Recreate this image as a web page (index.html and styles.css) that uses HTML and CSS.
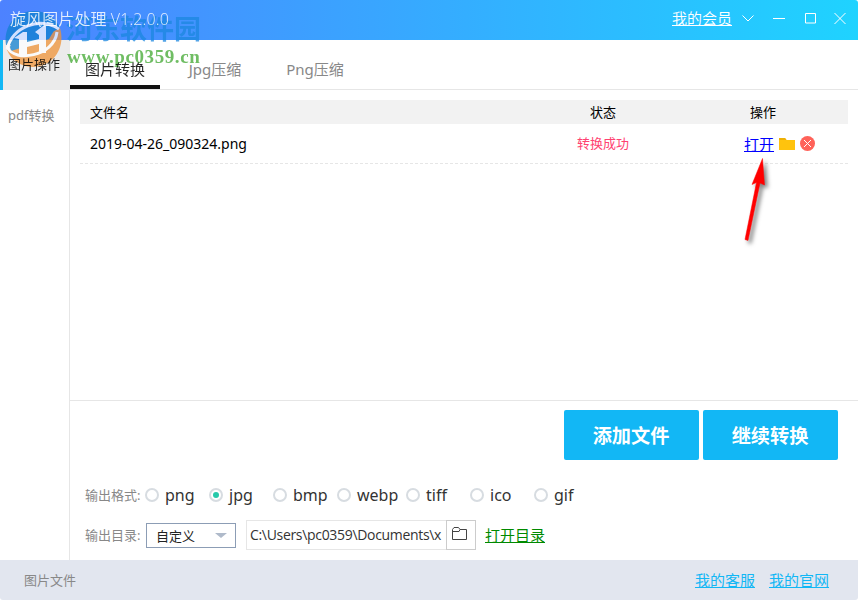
FILE: index.html
```html
<!DOCTYPE html>
<html lang="zh-CN">
<head>
<meta charset="UTF-8">
<meta name="viewport" content="width=device-width, initial-scale=1.0">
<title>旋风图片处理</title>
<link rel="stylesheet" href="styles.css">
</head>
<body>
<div class="window">
  <header class="titlebar">
    <span class="title">旋风图片处理 V1.2.0.0</span>
    <a class="member">我的会员</a>
    <svg class="ctrl ctrl-menu" width="12" height="12" viewBox="0 0 12 12"><path d="M.5 3.500L6 9l5.500-5.500"/></svg>
    <svg class="ctrl ctrl-min" width="12" height="12" viewBox="0 0 12 12"><path d="M0 6.500h12"/></svg>
    <svg class="ctrl ctrl-max" width="12" height="12" viewBox="0 0 12 12"><path d="M.5 1.500h10v9.500H.5z"/></svg>
    <svg class="ctrl" width="12" height="12" viewBox="0 0 12 12"><path d="M.5 1l11 11M11.500 1l-11 11"/></svg>
  </header>

  <div class="body">
    <nav class="sidebar">
      <a class="side-item active"><span>图片操作</span></a>
      <a class="side-item">pdf转换</a>
    </nav>

    <main class="main">
      <div class="tabs">
        <a class="tab active"><span>图片转换</span></a>
        <a class="tab">Jpg压缩</a>
        <a class="tab">Png压缩</a>
      </div>

      <div class="files">
        <div class="row row-head">
          <span class="name">文件名</span>
          <span class="status">状态</span>
          <span class="action">操作</span>
        </div>
        <div class="row row-file">
          <span class="name">2019-04-26_090324.png</span>
          <span class="status">转换成功</span>
          <span class="action">
            <a class="open">打开</a>
            <svg width="16" height="12" viewBox="0 0 16 12"><path d="M0 0h6l1.500 2H16v10H0z" fill="#ffc30d"/><path d="M0 0h6l1.500 2H0z" fill="#eeb005"/></svg>
            <svg width="15" height="15" viewBox="0 0 15 15"><circle cx="7.500" cy="7.500" r="7.500" fill="#ff6259"/><path d="M4 4l7 7M11 4l-7 7" stroke="#fff"/></svg>
          </span>
        </div>
      </div>

      <div class="buttons">
        <button class="btn">添加文件</button>
        <button class="btn">继续转换</button>
      </div>

      <div class="options formats">
        <span class="label">输出格式:</span>
        <label class="format"><i class="radio"></i>png</label>
        <label class="format"><i class="radio checked"></i>jpg</label>
        <label class="format"><i class="radio"></i>bmp</label>
        <label class="format format-wide"><i class="radio"></i>webp</label>
        <label class="format"><i class="radio"></i>tiff</label>
        <label class="format"><i class="radio"></i>ico</label>
        <label class="format"><i class="radio"></i>gif</label>
      </div>

      <div class="options output">
        <span class="label">输出目录:</span>
        <div class="select">自定义<i class="caret"></i></div>
        <div class="path">C:\Users\pc0359\Documents\x</div>
        <button class="browse">
          <svg width="15" height="14" viewBox="0 0 15 14"><path d="M.5 12.500v-10L2 .5h4.500L8 2.500h6.500v10zM.5 4.500H7l1-2" fill="none" stroke="#444"/></svg>
        </button>
        <a class="open-dir">打开目录</a>
      </div>
    </main>
  </div>

  <footer class="footer">
    <span>图片文件</span>
    <div class="links">
      <a>我的客服</a>
      <a>我的官网</a>
    </div>
  </footer>

  <div class="watermark">
    <svg class="wm-logo" width="58" height="58" viewBox="0 0 58 58">
      <path d="M1 34C-2 15 11 0 29 0c12 0 22 7 26 17L30 34z" fill="#1181cf"/>
      <path d="M55 17c6 20-7 39-27 39C16 56 6 49 2 39l28-9z" fill="#f09338"/>
      <path d="M5 36C10 20 32 10 50 18l-6 10-38 12z" fill="#1181cf"/>
      <path d="M2 38C8 16 34 5 54 18" fill="none" stroke="#fff" stroke-width="3"/>
      <path d="M3 37c6 14 46 9 49-16" fill="none" stroke="#fff" stroke-width="3"/>
      <path d="M9 27l9-6h4v24h-8V28zM30 21l8-6h3v27h-7V24z" fill="#fff"/>
      <path d="M22 31l12-3v5l-12 3z" fill="#fff"/>
    </svg>
    <div class="wm-name">河东软件园</div>
    <div class="wm-url">www.pc0359.cn</div>
  </div>

  <svg class="arrow" width="40" height="100" viewBox="0 0 40 100">
    <path d="M22.500 3.500L12 29.500l4.500-2L5 84.500l3 1L20 28l4.500 2z"/>
  </svg>
</div>
</body>
</html>
```
FILE: styles.css
```css
* {
    box-sizing: border-box;
}

body {
    margin: 0;
    background: #fff;
    font-family: "Noto Sans", "Noto Sans CJK SC", sans-serif;
    font-size: 13px;
    color: #000;
}

.window {
    position: relative;
    display: flex;
    flex-direction: column;
    width: 858px;
    height: 600px;
    overflow: hidden;
    border-radius: 3px;
}

.titlebar {
    display: flex;
    align-items: center;
    height: 40px;
    padding: 0 12px 4px 10px;
    background: linear-gradient(to right, #4d82ff, #1fd3ff);
    color: #fff;
}

.title {
    flex: 1;
    font-family: "Open Sans", "Noto Sans CJK SC", sans-serif;
    font-size: 16px;
    font-weight: 350;
    letter-spacing: 0.1px;
}

/* these labels stay readable above the watermark */
.title,
.active span {
    position: relative;
    z-index: 2;
    opacity: 0.85;
}

.member {
    margin-right: 10px;
    padding-bottom: 2px;
    font-size: 15px;
    font-weight: 350;
    text-decoration: underline;
}

.ctrl {
    fill: none;
    stroke: #fff;
}

.ctrl-menu {
    margin-right: 19px;
}

.ctrl-min {
    margin-right: 20px;
}

.ctrl-max {
    margin-right: 17px;
}

.body {
    display: flex;
    height: 520px;
}

.sidebar {
    width: 70px;
    border-right: 1px solid #e6e6e6;
}

.side-item {
    display: block;
    height: 50px;
    margin-right: -1px;
    padding-left: 8px;
    line-height: 50px;
    color: #888;
}

.side-item.active {
    padding-left: 5px;
    border-left: 3px solid #12b7f5;
    background: #ebebeb;
    line-height: 49px;
    color: #000;
}

.main {
    flex: 1;
}

.tabs {
    display: flex;
    height: 50px;
    border-bottom: 1px solid #e6e6e6;
}

.tab {
    width: 90px;
    height: 49px;
    margin-right: 10px;
    padding-top: 9px;
    line-height: 40px;
    text-align: center;
    font-family: "Noto Sans", "Noto Sans CJK SC", sans-serif;
    font-size: 15px;
    color: #888;
}

.tab.active {
    border-bottom: 4px solid #111;
    color: #000;
}

.files {
    height: 311px;
    padding: 10px 10px 0;
    border-bottom: 1px solid #e6e6e6;
}

.row {
    display: grid;
    grid-template-columns: 438px 170px 160px;
    align-items: center;
}

.row-head {
    height: 24px;
    padding-bottom: 2px;
    background: #f2f2f2;
}

.row-file {
    height: 40px;
    border-bottom: 1px dashed #e6e6e6;
}

.name {
    padding-left: 10px;
}

.row-file .name {
    font-size: 14px;
}

.status {
    text-align: center;
}

.row-file .status {
    padding-bottom: 2px;
    color: #ff4271;
}

.action {
    display: flex;
    align-items: center;
    gap: 5px;
    padding-left: 56px;
}

.row-head .action {
    padding-left: 62px;
}

.open {
    font-size: 15px;
    color: #00f;
    text-decoration: underline;
}

.buttons {
    display: flex;
    justify-content: flex-end;
    gap: 4px;
    padding: 9px 20px 0 0;
}

.btn {
    width: 135px;
    height: 50px;
    padding: 0 1px 0 0;
    border: none;
    border-radius: 2px;
    background: #12b7f5;
    color: #fff;
    font-family: "Noto Sans", "Noto Sans CJK SC", sans-serif;
    font-size: 19.2px;
    font-weight: bold;
}

.options {
    display: flex;
    align-items: center;
    padding-left: 15px;
}

.formats {
    height: 30px;
    margin-top: 20px;
}

.output {
    height: 30px;
    margin-top: 10px;
}

.label {
    width: 60px;
    padding-bottom: 2px;
    white-space: nowrap;
    color: #888;
}

.format {
    display: flex;
    align-items: center;
    gap: 6px;
    width: 64px;
    font-size: 16px;
    color: #333;
}

.format-wide {
    width: 69px;
}

.radio {
    display: flex;
    align-items: center;
    justify-content: center;
    width: 14px;
    height: 14px;
    border: 2px solid #d7dce1;
    border-radius: 50%;
}

.checked::before {
    content: "";
    width: 6px;
    height: 6px;
    border-radius: 50%;
    background: #27c9aa;
}

.select {
    display: flex;
    align-items: center;
    justify-content: space-between;
    width: 90px;
    height: 25px;
    margin: 0 10px 0 1px;
    padding: 1px 8px 0 9px;
    border: 1px solid #8c9db5;
    color: #222;
}

.caret {
    border: 6px solid transparent;
    border-top: 5px solid #afbaca;
    border-bottom: 0;
}

.path {
    width: 200px;
    height: 30px;
    padding-left: 3px;
    border: 1px solid #e6e6e6;
    border-right: 0;
    line-height: 28px;
    font-family: "Open Sans", sans-serif;
    font-size: 14px;
    letter-spacing: -0.32px;
    white-space: nowrap;
    overflow: hidden;
    color: #333;
}

.browse {
    width: 30px;
    height: 30px;
    padding: 0 4px 0 0;
    border: 1px solid #ccc;
    background: #fff;
}

.open-dir {
    margin-left: 9px;
    padding-bottom: 1px;
    font-size: 15px;
    color: #008a00;
    text-decoration: underline;
}

.footer {
    display: flex;
    align-items: center;
    justify-content: space-between;
    height: 40px;
    padding: 0 29px 2px 24px;
    background: #e2e6ef;
    color: #888;
}

.links {
    display: flex;
    gap: 14px;
    font-size: 15px;
    color: #12b7f5;
    text-decoration: underline;
}

.watermark {
    position: absolute;
    left: 5px;
    top: 11px;
    z-index: 1;
    opacity: 0.75;
    pointer-events: none;
}

.wm-name {
    position: absolute;
    left: 61px;
    top: -2px;
    line-height: 38px;
    font-family: "Noto Sans CJK SC", sans-serif;
    font-size: 27px;
    font-weight: bold;
    white-space: nowrap;
    color: #1b87e0;
}

.wm-url {
    position: absolute;
    left: 62px;
    top: 35px;
    line-height: 22px;
    font-family: "Liberation Serif", serif;
    font-size: 19px;
    font-weight: bold;
    letter-spacing: 0.6px;
    color: #3fa72f;
}

.arrow {
    position: absolute;
    left: 740px;
    top: 155px;
    fill: #f00;
    stroke: #f00;
    stroke-width: 0.5;
    filter: drop-shadow(3px 3px 2px rgba(0, 0, 0, 0.5));
}
```
